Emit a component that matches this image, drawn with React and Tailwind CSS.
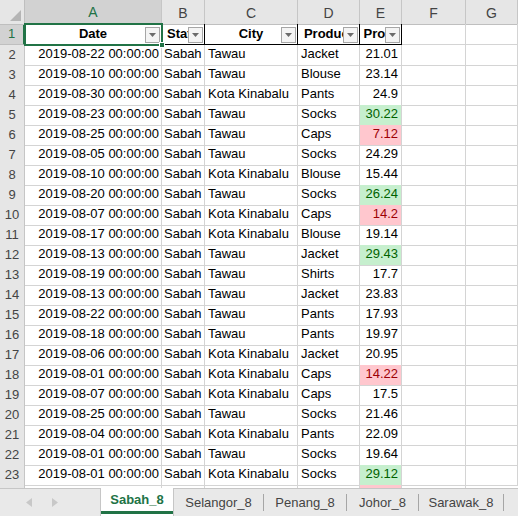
import React from "react";

const rows = [
  ["2019-08-22 00:00:00", "Tawau", "Jacket", "21.01", ""],
  ["2019-08-10 00:00:00", "Tawau", "Blouse", "23.14", ""],
  ["2019-08-30 00:00:00", "Kota Kinabalu", "Pants", "24.9", ""],
  ["2019-08-23 00:00:00", "Tawau", "Socks", "30.22", "g"],
  ["2019-08-25 00:00:00", "Tawau", "Caps", "7.12", "r"],
  ["2019-08-05 00:00:00", "Tawau", "Socks", "24.29", ""],
  ["2019-08-10 00:00:00", "Kota Kinabalu", "Blouse", "15.44", ""],
  ["2019-08-20 00:00:00", "Tawau", "Socks", "26.24", "g"],
  ["2019-08-07 00:00:00", "Kota Kinabalu", "Caps", "14.2", "r"],
  ["2019-08-17 00:00:00", "Kota Kinabalu", "Blouse", "19.14", ""],
  ["2019-08-13 00:00:00", "Tawau", "Jacket", "29.43", "g"],
  ["2019-08-19 00:00:00", "Tawau", "Shirts", "17.7", ""],
  ["2019-08-13 00:00:00", "Tawau", "Jacket", "23.83", ""],
  ["2019-08-22 00:00:00", "Tawau", "Pants", "17.93", ""],
  ["2019-08-18 00:00:00", "Tawau", "Pants", "19.97", ""],
  ["2019-08-06 00:00:00", "Kota Kinabalu", "Jacket", "20.95", ""],
  ["2019-08-01 00:00:00", "Kota Kinabalu", "Caps", "14.22", "r"],
  ["2019-08-07 00:00:00", "Kota Kinabalu", "Caps", "17.5", ""],
  ["2019-08-25 00:00:00", "Tawau", "Socks", "21.46", ""],
  ["2019-08-04 00:00:00", "Kota Kinabalu", "Pants", "22.09", ""],
  ["2019-08-01 00:00:00", "Tawau", "Socks", "19.64", ""],
  ["2019-08-01 00:00:00", "Kota Kinabalu", "Socks", "29.12", "g"],
];

const grid = "grid grid-cols-[25px_137px_43px_93px_62px_42px_64px_1fr]";
const cell = "border-r border-b border-[#d4d4d4] overflow-hidden whitespace-nowrap flex items-end pb-[1px]";

function FilterBtn() {
  return (
    <div className="absolute right-[1px] top-[3px] w-[15px] h-[16px] border border-[#a6a6a6] bg-[#f4f4f4] flex items-center justify-center">
      <svg width="7" height="4" viewBox="0 0 7 4"><path d="M0 0h7L3.5 4z" fill="#6b6b6b" /></svg>
    </div>
  );
}

export default function App() {
  const colLetters = ["A", "B", "C", "D", "E", "F", "G"];
  const headers = ["Date", "State", "City", "Product", "Profit"];
  return (
    <div className="w-[518px] h-[516px] overflow-hidden bg-white flex flex-col text-[13px] text-black" style={{ fontFamily: '"Liberation Sans", Arial, sans-serif' }}>
      <div className="relative h-[488px] shrink-0 overflow-hidden flex flex-col">
        {/* column header */}
        <div className={`${grid} h-[24px] shrink-0`}>
          <div className="bg-[#e6e6e6] border-r border-b border-[#bfbfbf] relative">
            <svg className="absolute right-[3px] bottom-[3px]" width="11" height="11" viewBox="0 0 11 11"><path d="M11 0V11H0z" fill="#b5b5b5" /></svg>
          </div>
          {colLetters.map((l, i) => (
            <div key={l} className={`${i === 0 ? "bg-[#d2d2d2] text-[#217346] border-b-2 border-b-[#217346]" : "bg-[#e6e6e6] text-[#444] border-b border-b-[#bfbfbf]"} border-r border-r-[#c6c6c6] flex items-center justify-center text-[14px] pt-[2px]`}>
              {l}
            </div>
          ))}
        </div>
        {/* row 1 */}
        <div className={`${grid} h-[21px] shrink-0`}>
          <div className="bg-[#d2d2d2] text-[#217346] border-r-2 border-r-[#217346] border-b border-b-[#bfbfbf] flex items-center justify-center">1</div>
          {headers.map((h) => (
            <div key={h} className="relative border-b border-r border-black overflow-hidden whitespace-nowrap flex items-end justify-center pb-[1px] font-bold">
              <span className="shrink-0">{h}</span>
              <FilterBtn />
            </div>
          ))}
          <div className={cell}></div>
          <div className={cell}></div>
        </div>
        {/* data rows */}
        {rows.map((r, idx) => {
          const n = idx + 2;
          const fill = r[4] === "g" ? "bg-[#c6efce] text-[#006100]" : r[4] === "r" ? "bg-[#ffc7ce] text-[#9c0006]" : "";
          return (
            <div key={n} className={`${grid} h-[20px] shrink-0`}>
              <div className="bg-[#e6e6e6] text-[#444] border-r border-b border-[#c6c6c6] flex items-center justify-center">{n}</div>
              <div className={`${cell} justify-end pr-[2px]`}>{r[0]}</div>
              <div className={`${cell} pl-[2px]`}>Sabah</div>
              <div className={`${cell} pl-[3px]`}>{r[1]}</div>
              <div className={`${cell} pl-[3px]`}>{r[2]}</div>
              <div className={`${cell} justify-end pr-[3px] ${fill}`}>{r[3]}</div>
              <div className={cell}></div>
              <div className={cell}></div>
            </div>
          );
        })}
        {/* partially visible row 24 */}
        <div className={`${grid} h-[20px] shrink-0`}>
          <div className="bg-[#e6e6e6] border-r border-[#c6c6c6]"></div>
          <div className="border-r border-[#d4d4d4]"></div>
          <div className="border-r border-[#d4d4d4]"></div>
          <div className="border-r border-[#d4d4d4]"></div>
          <div className="border-r border-[#d4d4d4]"></div>
          <div className="border-r border-[#d4d4d4] bg-[#ffc7ce]"></div>
          <div className="border-r border-[#d4d4d4]"></div>
          <div></div>
        </div>
        {/* selection overlay */}
        <div className="absolute left-[24px] top-[23px] w-[139px] h-[23px] border-2 border-[#217346] pointer-events-none" />
        <div className="absolute left-[159px] top-[42px] w-[6px] h-[6px] bg-[#217346] border border-white" />
      </div>
      {/* sheet tabs */}
      <div className="h-[28px] shrink-0 bg-[#e9e9e9] border-t border-[#c6c6c6] flex items-stretch text-[13px] text-[#444]">
        <div className="w-[100px] flex items-center gap-[20px] pl-[26px]">
          <svg width="6" height="9" viewBox="0 0 6 9"><path d="M6 0V9L0 4.5z" fill="#c8c8c8" /></svg>
          <svg width="6" height="9" viewBox="0 0 6 9"><path d="M0 0V9L6 4.5z" fill="#c8c8c8" /></svg>
        </div>
        <div className="w-[74px] -mt-px bg-white border-l border-r border-[#c6c6c6] flex flex-col items-center">
          <div className="flex-1 flex items-center font-bold text-[#217346]">Sabah_8</div>
          <div className="w-full h-[3px] bg-[#217346] mb-[2px]" />
        </div>
        <div className="w-[89px] flex items-center justify-center">Selangor_8</div>
        <div className="w-px bg-[#a6a6a6] my-[5px]" />
        <div className="w-[82px] flex items-center justify-center">Penang_8</div>
        <div className="w-px bg-[#a6a6a6] my-[5px]" />
        <div className="w-[71px] flex items-center justify-center">Johor_8</div>
        <div className="w-px bg-[#a6a6a6] my-[5px]" />
        <div className="w-[84px] flex items-center justify-center">Sarawak_8</div>
        <div className="w-px bg-[#a6a6a6] my-[5px]" />
      </div>
    </div>
  );
}
